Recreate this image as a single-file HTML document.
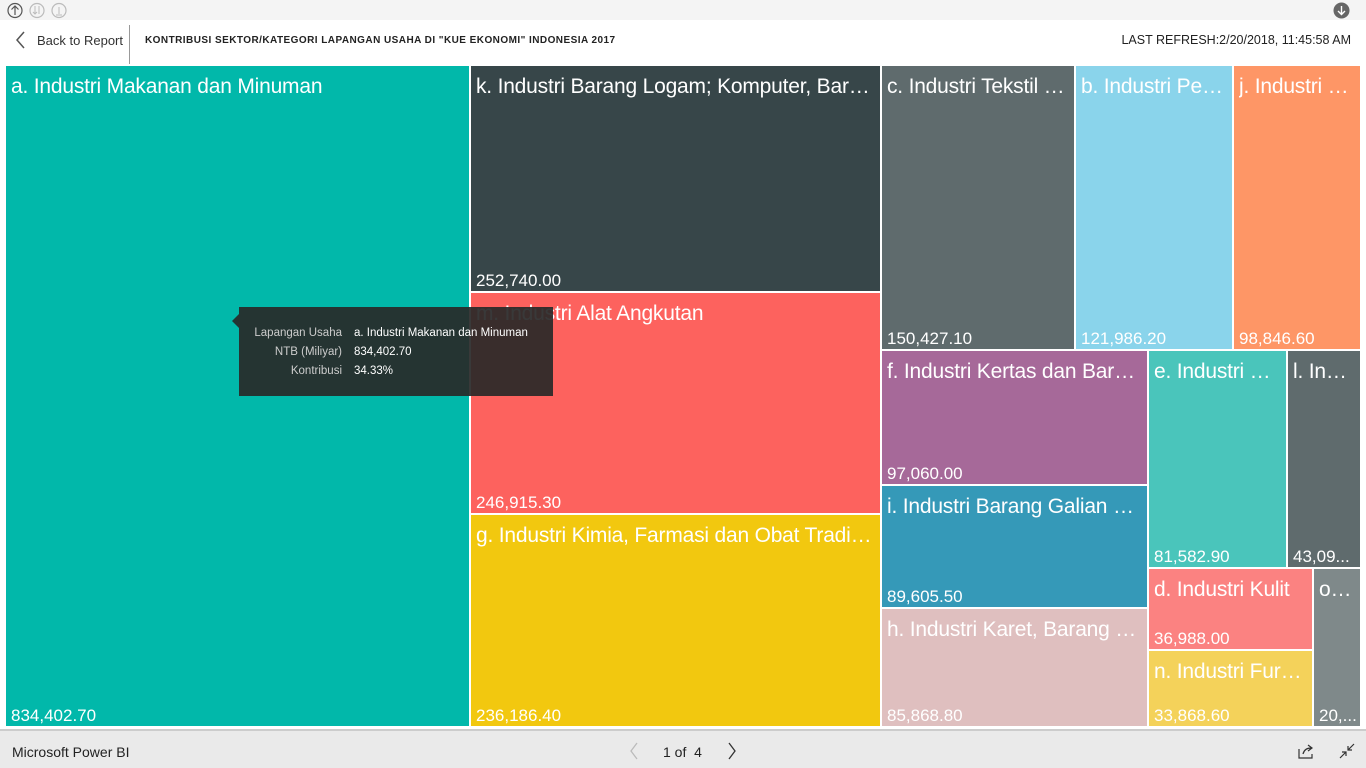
<!DOCTYPE html><html><head><style>
body{margin:0;width:1366px;height:768px;background:#fff;font-family:"Liberation Sans","DejaVu Sans",sans-serif;position:relative;overflow:hidden}
.t{position:absolute;overflow:hidden;color:#fff}
.t .n{position:absolute;left:5px;top:9px;right:4px;font-size:21px;white-space:nowrap;overflow:hidden;text-overflow:ellipsis;letter-spacing:-0.2px}
.t .v{position:absolute;left:5px;bottom:0px;font-size:17px;white-space:nowrap}
</style></head><body>
<div style="position:absolute;left:0;top:0;width:1366px;height:20px;background:#f4f4f4"></div>
<svg style="position:absolute;left:6px;top:2px" width="62" height="17">
<circle cx="9" cy="8.5" r="7" fill="none" stroke="#555" stroke-width="1.2"/><path d="M9 13V4M5.5 7.5 9 4l3.5 3.5" fill="none" stroke="#555" stroke-width="1.2"/>
<circle cx="31" cy="8.5" r="7" fill="none" stroke="#bbb" stroke-width="1.2"/><path d="M29 4v8M33 4v8M27 10l2 2 2-2" fill="none" stroke="#bbb"/>
<circle cx="53" cy="8.5" r="7" fill="none" stroke="#bbb" stroke-width="1.2"/><path d="M53 5v7M50 13h6" fill="none" stroke="#bbb"/>
</svg>
<svg style="position:absolute;left:1333px;top:2px" width="17" height="17"><circle cx="8.5" cy="8.5" r="8" fill="#666"/><path d="M8.5 4v8M5 9l3.5 3.5L12 9" fill="none" stroke="#fff" stroke-width="1.4"/></svg>
<svg style="position:absolute;left:15px;top:31px" width="12" height="18"><path d="M9 1 2 9l7 8" fill="none" stroke="#555" stroke-width="1.5"/></svg>
<div style="position:absolute;left:37px;top:33px;font-size:13px;color:#333">Back to Report</div>
<div style="position:absolute;left:129px;top:25px;width:1px;height:39px;background:#999"></div>
<div style="position:absolute;left:145px;top:35px;font-size:10px;font-weight:bold;color:#222;letter-spacing:0.45px">KONTRIBUSI SEKTOR/KATEGORI LAPANGAN USAHA DI "KUE EKONOMI" INDONESIA 2017</div>
<div style="position:absolute;right:15px;top:33px;font-size:12.5px;color:#222">LAST REFRESH:2/20/2018, 11:45:58 AM</div>

<div class="t" style="left:6px;top:66px;width:463px;height:660px;background:#01b8aa"><div class="n">a. Industri Makanan dan Minuman</div><div class="v">834,402.70</div></div>
<div class="t" style="left:471px;top:66px;width:409px;height:225px;background:#374649"><div class="n">k. Industri Barang Logam; Komputer, Barang Elektronik</div><div class="v">252,740.00</div></div>
<div class="t" style="left:471px;top:293px;width:409px;height:220px;background:#fd625e"><div class="n">m. Industri Alat Angkutan</div><div class="v">246,915.30</div></div>
<div class="t" style="left:471px;top:515px;width:409px;height:211px;background:#f2c80f"><div class="n">g. Industri Kimia, Farmasi dan Obat Tradisional</div><div class="v">236,186.40</div></div>
<div class="t" style="left:882px;top:66px;width:192px;height:283px;background:#5f6b6d"><div class="n">c. Industri Tekstil dan Pakaian</div><div class="v">150,427.10</div></div>
<div class="t" style="left:1076px;top:66px;width:156px;height:283px;background:#8ad4eb"><div class="n">b. Industri Pengolahan</div><div class="v">121,986.20</div></div>
<div class="t" style="left:1234px;top:66px;width:126px;height:283px;background:#fe9666"><div class="n">j. Industri Logam</div><div class="v">98,846.60</div></div>
<div class="t" style="left:882px;top:351px;width:265px;height:133px;background:#a66999"><div class="n">f. Industri Kertas dan Barang</div><div class="v">97,060.00</div></div>
<div class="t" style="left:882px;top:486px;width:265px;height:121px;background:#3599b8"><div class="n">i. Industri Barang Galian Bukan</div><div class="v">89,605.50</div></div>
<div class="t" style="left:882px;top:609px;width:265px;height:117px;background:#dfbfbf"><div class="n">h. Industri Karet, Barang dari</div><div class="v">85,868.80</div></div>
<div class="t" style="left:1149px;top:351px;width:137px;height:216px;background:#4ac5bb"><div class="n">e. Industri Kayu</div><div class="v">81,582.90</div></div>
<div class="t" style="left:1288px;top:351px;width:72px;height:216px;background:#5f6b6d"><div class="n">l. Industri</div><div class="v">43,09...</div></div>
<div class="t" style="left:1149px;top:569px;width:163px;height:80px;background:#fb8281"><div class="n">d. Industri Kulit</div><div class="v">36,988.00</div></div>
<div class="t" style="left:1149px;top:651px;width:163px;height:75px;background:#f4d25a"><div class="n">n. Industri Furnitur</div><div class="v">33,868.60</div></div>
<div class="t" style="left:1314px;top:569px;width:46px;height:157px;background:#7f898a"><div class="n">o. Industri</div><div class="v">20,...</div></div>

<div style="position:absolute;left:232px;top:314px;width:0;height:0;border-top:7px solid transparent;border-bottom:7px solid transparent;border-right:7px solid rgba(40,40,40,.92)"></div>
<div style="position:absolute;left:239px;top:307px;width:314px;height:89px;background:rgba(40,40,40,.92);font-size:11.5px;color:#fff">
<div style="position:absolute;right:211px;top:17px;text-align:right;line-height:19px;color:#ccc">Lapangan Usaha<br>NTB (Miliyar)<br>Kontribusi</div>
<div style="position:absolute;left:115px;top:17px;line-height:19px">a. Industri Makanan dan Minuman<br>834,402.70<br>34.33%</div>
</div>

<div style="position:absolute;left:0;top:729px;width:1366px;height:2px;background:#ccc"></div>
<div style="position:absolute;left:0;top:731px;width:1366px;height:37px;background:#eaeaea"></div>
<div style="position:absolute;left:12px;top:744px;font-size:14px;color:#222">Microsoft Power BI</div>
<svg style="position:absolute;left:628px;top:742px" width="12" height="18"><path d="M9 1 3 9l6 8" fill="none" stroke="#bbb" stroke-width="1.3"/></svg>
<div style="position:absolute;left:663px;top:744px;font-size:14px;color:#222">1 of&nbsp; 4</div>
<svg style="position:absolute;left:726px;top:742px" width="12" height="18"><path d="M3 1l6 8-6 8" fill="none" stroke="#333" stroke-width="1.3"/></svg>
<svg style="position:absolute;left:1297px;top:742px" width="18" height="18"><path d="M2 7v9h13v-4" fill="none" stroke="#333" stroke-width="1.2"/><path d="M6 12c1-4 4-6 8-6M11 3l4 3-4 3" fill="none" stroke="#333" stroke-width="1.2"/></svg>
<svg style="position:absolute;left:1338px;top:742px" width="18" height="18"><path d="M16 2l-6 6M10 4v4h4M2 16l6-6M8 14v-4H4" fill="none" stroke="#333" stroke-width="1.2"/></svg>
</body></html>
